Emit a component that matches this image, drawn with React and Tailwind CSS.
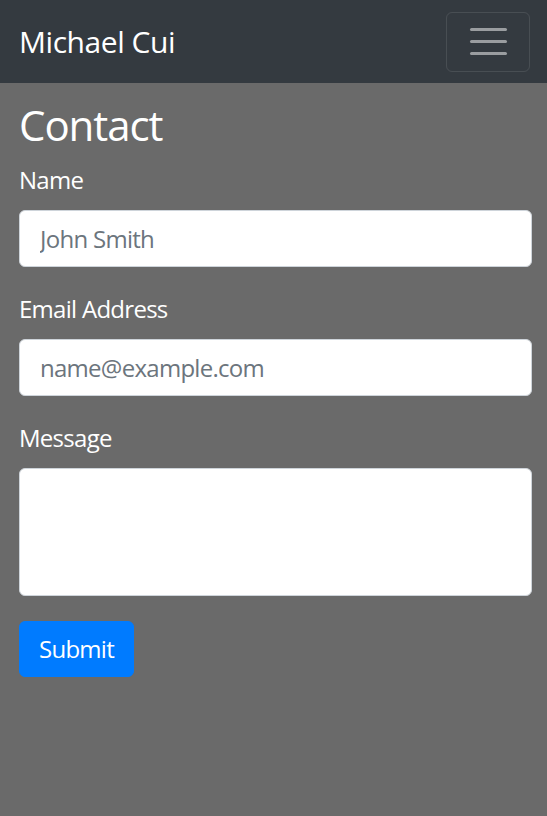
export default function App() {
  const font = { fontFamily: '"Open Sans", "Noto Sans", sans-serif' };
  const inputCls =
    "block w-full h-[57px] bg-white border border-[#ced4da] rounded-[6px] pl-[20px] pr-[18px] text-[24px] tracking-[-0.03em] text-[#495057] placeholder:text-[#6c757d] outline-none";
  const labelCls = "block text-white text-[24px] leading-[36px] tracking-[-0.03em] mb-[12px]";
  return (
    <div className="min-h-[816px] bg-[#6a6a6a]" style={font}>
      <nav className="h-[83px] bg-[#343a40] flex items-center justify-between pl-[19px] pr-[17px]">
        <a className="text-white text-[30px] leading-[45px] tracking-[-0.015em]">Michael Cui</a>
        <button className="w-[84px] h-[60px] border border-white/10 rounded-[6px] flex flex-col items-center justify-center gap-[9px]">
          <span className="block w-[37px] h-[3px] bg-[#9a9da0] rounded-full" />
          <span className="block w-[37px] h-[3px] bg-[#9a9da0] rounded-full" />
          <span className="block w-[37px] h-[3px] bg-[#9a9da0] rounded-full" />
        </button>
      </nav>
      <main className="pt-[17px] pl-[19px] pr-[15px]">
        <h1 className="text-white text-[42px] leading-[50px] tracking-[-0.025em] mb-[12px]">Contact</h1>
        <form>
          <div className="mb-[24px]">
            <label className={labelCls}>Name</label>
            <input className={inputCls} placeholder="John Smith" />
          </div>
          <div className="mb-[24px]">
            <label className={labelCls}>Email Address</label>
            <input className={inputCls} placeholder="name@example.com" />
          </div>
          <div className="mb-[25px]">
            <label className={labelCls}>Message</label>
            <textarea className="block w-full h-[128px] bg-white border border-[#ced4da] rounded-[6px] px-[18px] py-[9px] text-[24px] leading-[36px] resize-none outline-none" />
          </div>
          <button
            type="button"
            className="h-[56px] w-[115px] bg-[#007bff] text-white text-[24px] leading-[36px] tracking-[-0.03em] rounded-[6px] border border-[#007bff]"
          >
            Submit
          </button>
        </form>
      </main>
    </div>
  );
}
